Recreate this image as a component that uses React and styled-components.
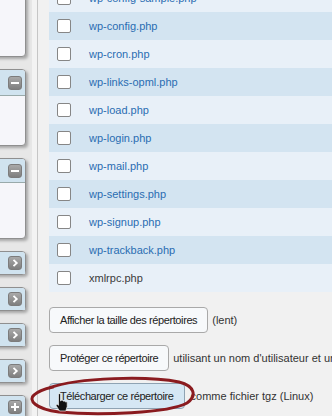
import React from "react";
import styled, { createGlobalStyle } from "styled-components";

const Global = createGlobalStyle`
  html, body { margin: 0; padding: 0; overflow: hidden; }
  body { font-family: "Liberation Sans", Arial, sans-serif; background: #f1f1f1; }
`;

const Page = styled.div`
  position: relative;
  display: flex;
  width: 332px;
  height: 416px;
  overflow: hidden;
`;

const Sidebar = styled.div`
  width: 37px;
  flex: none;
  background: #e7e7e7;
  border-right: 1px solid #c6c6c6;
  box-shadow: inset -5px 0 0 #f3f3f3;
  display: flex;
  flex-direction: column;
  gap: 12px;
  overflow: hidden;
`;

const Panel = styled.div`
  margin-left: -11px;
  width: 37px;
  box-sizing: border-box;
  border: 1px solid #8f8f8f;
  border-radius: 4px;
  background: #f6f6fa;
  box-shadow: 2px 2px 3px rgba(0, 0, 0, 0.28);
  display: flex;
  flex-direction: column;
  flex: none;
  margin-top: ${(p) => p.$offset || 0}px;
`;

const PanelHead = styled.div`
  height: ${(p) => p.$h}px;
  box-sizing: border-box;
  background: #d0e3ef;
  border-bottom: ${(p) => (p.$open ? "1px solid #9aa" : "none")};
  border-radius: 3px 3px 0 0;
  display: flex;
  align-items: center;
  justify-content: flex-end;
  padding-right: 3px;
`;

const PanelBody = styled.div`
  height: ${(p) => p.$h}px;
`;

const IconBtn = styled.div`
  width: 14px;
  height: 14px;
  box-sizing: border-box;
  border: 1px solid #7c7c7c;
  border-radius: 3px;
  background: linear-gradient(#a9a9a9, #7f7f7f);
  display: flex;
  align-items: center;
  justify-content: center;
`;

const Main = styled.div`
  flex: 1;
  background: #f1f1f1;
  padding-left: 11px;
  overflow: hidden;
  display: flex;
  flex-direction: column;
`;

const FileList = styled.div`
  margin-top: -16px;
  display: flex;
  flex-direction: column;
`;

const Row = styled.div`
  height: 28px;
  flex: none;
  display: flex;
  align-items: center;
  background: ${(p) => (p.$dark ? "#d3e4f1" : "#e8f0f8")};
  font-size: 11px;
`;

const Check = styled.span`
  width: 14px;
  height: 14px;
  box-sizing: border-box;
  margin-left: 8px;
  margin-right: 18px;
  border: 1.5px solid #868686;
  border-radius: 2px;
  background: #fff;
  flex: none;
`;

const FileLink = styled.a`
  color: ${(p) => (p.$plain ? "#3a3a3a" : "#2a6db2")};
  text-decoration: none;
`;

const Actions = styled.div`
  margin-top: 15px;
  display: flex;
  flex-direction: column;
  gap: 12px;
`;

const ActionRow = styled.div`
  display: flex;
  align-items: center;
  gap: ${(p) => p.$gap || 4}px;
  white-space: nowrap;
  font-size: 11px;
  color: #333;
`;

const Button = styled.button`
  height: 26px;
  box-sizing: border-box;
  padding: 0 10px;
  font-family: "Liberation Sans", Arial, sans-serif;
  font-size: 11px;
  letter-spacing: -0.4px;
  color: #222;
  border: 1px solid ${(p) => (p.$active ? "#8fa3b3" : "#a9a9a9")};
  border-radius: 4px;
  background: ${(p) => (p.$active ? "#d5e7f4" : "#f7f9fb")};
  flex: none;
`;

const Annotation = styled.svg`
  position: absolute;
  left: 29px;
  top: 375px;
  pointer-events: none;
`;

const Cursor = styled.svg`
  position: absolute;
  left: 55px;
  top: 393px;
  pointer-events: none;
`;

const Minus = () => (
  <IconBtn>
    <svg width="8" height="8" viewBox="0 0 8 8">
      <rect x="0" y="3" width="8" height="2" fill="#fff" />
    </svg>
  </IconBtn>
);

const Chevron = () => (
  <IconBtn>
    <svg width="8" height="8" viewBox="0 0 8 8">
      <path d="M2.5 0.8 L5.8 4 L2.5 7.2" fill="none" stroke="#fff" strokeWidth="1.8" />
    </svg>
  </IconBtn>
);

const Plus = () => (
  <IconBtn>
    <svg width="8" height="8" viewBox="0 0 8 8">
      <rect x="0" y="3" width="8" height="2" fill="#fff" />
      <rect x="3" y="0" width="2" height="8" fill="#fff" />
    </svg>
  </IconBtn>
);

const files = [
  "wp-config-sample.php",
  "wp-config.php",
  "wp-cron.php",
  "wp-links-opml.php",
  "wp-load.php",
  "wp-login.php",
  "wp-mail.php",
  "wp-settings.php",
  "wp-signup.php",
  "wp-trackback.php",
  "xmlrpc.php",
];

export default function App() {
  return (
    <>
      <Global />
      <Page>
        <Sidebar>
          <Panel $offset={-6}>
            <PanelBody $h={61} />
          </Panel>
          <Panel>
            <PanelHead $h={26} $open>
              <Minus />
            </PanelHead>
            <PanelBody $h={49} />
          </Panel>
          <Panel>
            <PanelHead $h={24} $open>
              <Minus />
            </PanelHead>
            <PanelBody $h={55} />
          </Panel>
          {[0, 1, 2, 3].map((i) => (
            <Panel key={i}>
              <PanelHead $h={22}>
                <Chevron />
              </PanelHead>
            </Panel>
          ))}
          <Panel>
            <PanelHead $h={22}>
              <Plus />
            </PanelHead>
          </Panel>
        </Sidebar>
        <Main>
          <FileList>
            {files.map((f, i) => (
              <Row key={f} $dark={i % 2 === 1}>
                <Check />
                <FileLink href="#" $plain={f === "xmlrpc.php"}>
                  {f}
                </FileLink>
              </Row>
            ))}
          </FileList>
          <Actions>
            <ActionRow>
              <Button>Afficher la taille des répertoires</Button>
              <span>(lent)</span>
            </ActionRow>
            <ActionRow>
              <Button>Protéger ce répertoire</Button>
              <span>utilisant un nom d'utilisateur et un mot de passe</span>
            </ActionRow>
            <ActionRow $gap={6}>
              <Button $active>Télécharger ce répertoire</Button>
              <span>comme fichier tgz (Linux)</span>
            </ActionRow>
          </Actions>
        </Main>
        <Annotation width="170" height="42" viewBox="0 0 170 42">
          <path
            d="M20 13 C50 2 120 1 150 7 C166 11 168 21 158 28 C140 38 70 41 30 37 C6 34 -1 25 5 20 C9 16 15 14 24 12"
            fill="none"
            stroke="#8a1b1f"
            strokeWidth="3"
            strokeLinecap="round"
          />
        </Annotation>
        <Cursor width="14" height="19" viewBox="0 0 14 19">
          <path
            d="M3.5 1.2 Q4.5 0.2 5.5 1.2 L5.5 8 L6.5 7.3 Q7.6 6.8 8.2 7.8 L8.4 8.2 Q9.4 7.5 10.2 8.5 L10.4 9 Q11.4 8.5 12.2 9.5 L12.2 13.5 L10.8 18 L4.5 18 L1.2 12.8 Q0.6 11.2 2.2 11.2 L3.5 12.3 Z"
            fill="#111"
            stroke="#eee"
            strokeWidth="0.7"
          />
        </Cursor>
      </Page>
    </>
  );
}
